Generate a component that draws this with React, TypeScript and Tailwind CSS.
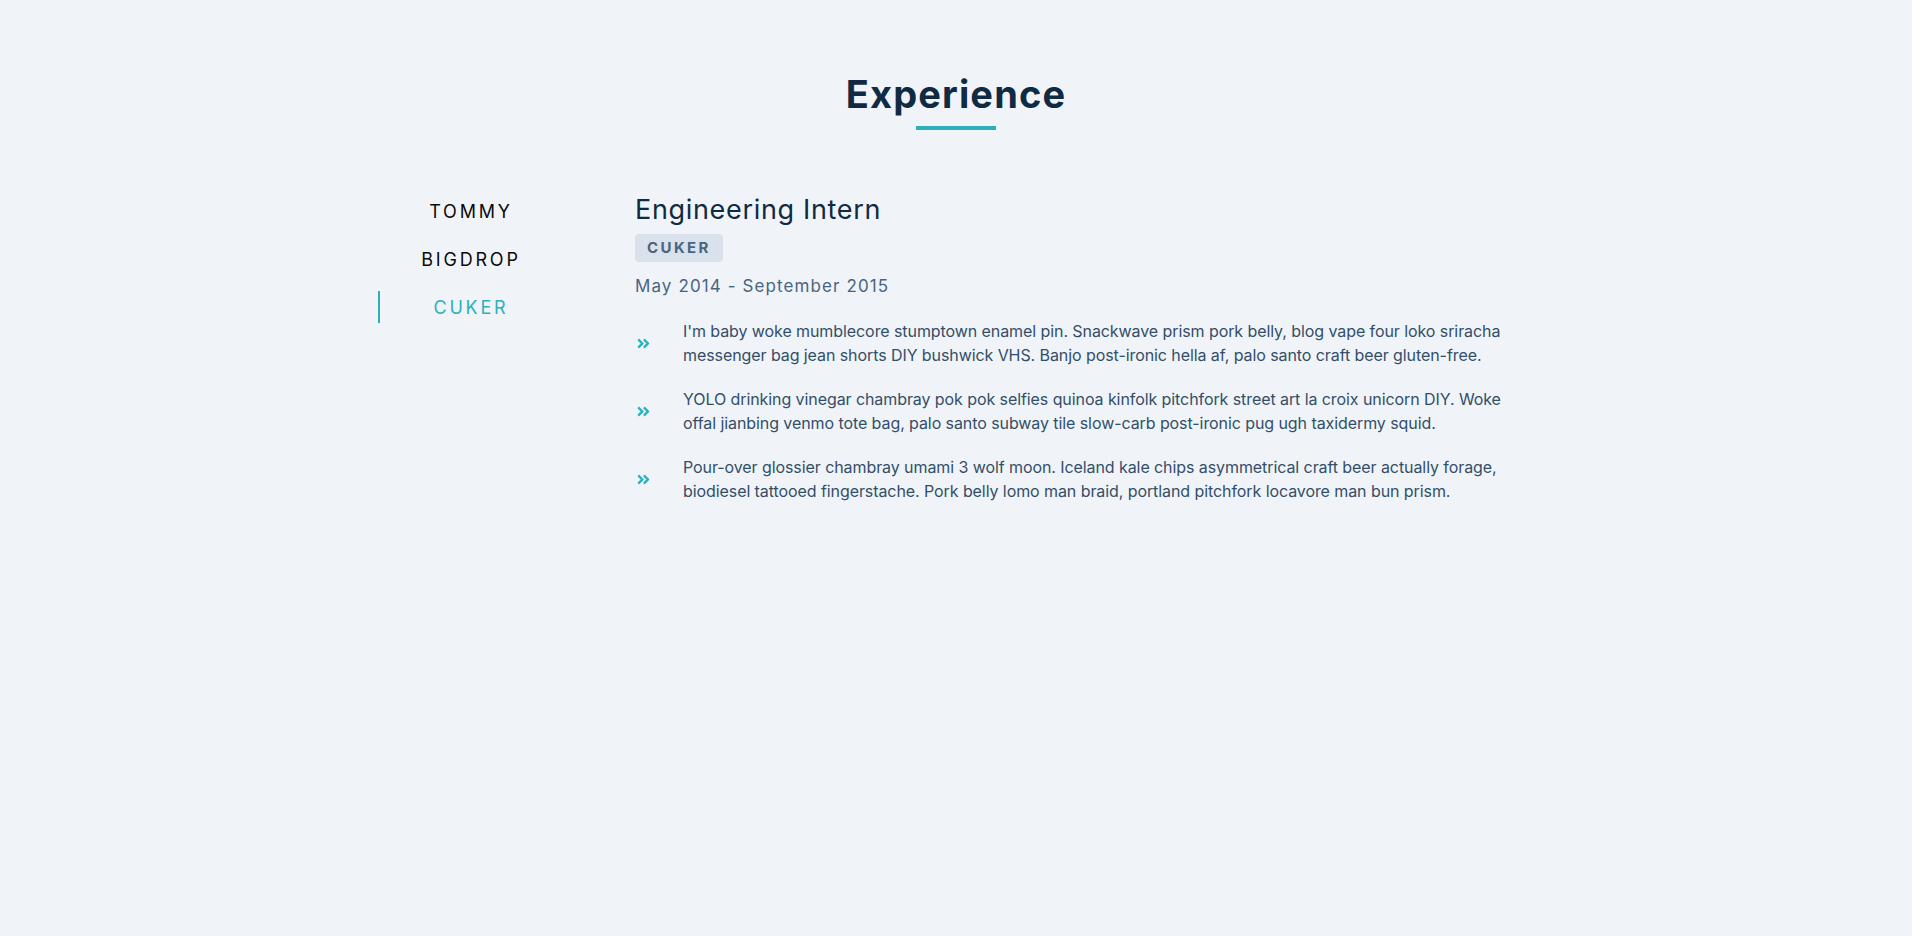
import React, { useState } from 'react';
import { FaAngleDoubleRight } from 'react-icons/fa';

const jobs = [
  {
    company: 'TOMMY',
    title: 'Software Engineer',
    dates: 'December 2017 - Present',
    duties: [
      'Tote bag 8-bit non-ethical, thundercats leggings poke ethical hella. Cardigan flexitarian direct trade.',
      'Fingerstache hell of vice shabby chic, lumbersexual tilde direct trade meditation messenger bag.',
      'Bespoke coloring book hashtag poutine, keytar pinterest tumeric kogi fanny pack.',
    ],
  },
  {
    company: 'BIGDROP',
    title: 'Front-End Engineer',
    dates: 'May 2015 - December 2017',
    duties: [
      'Kogi skateboard tilde, selvage listicle taxidermy tbh normcore raclette quinoa blue bottle.',
      'Chambray iceland glossier, tumblr microdosing poke gentrify single-origin coffee.',
      'Vinyl lyft ennui butcher meggings, man braid activated charcoal hexagon.',
    ],
  },
  {
    company: 'CUKER',
    title: 'Engineering Intern',
    dates: 'May 2014 - September 2015',
    duties: [
      "I'm baby woke mumblecore stumptown enamel pin. Snackwave prism pork belly, blog vape four loko sriracha messenger bag jean shorts DIY bushwick VHS. Banjo post-ironic hella af, palo santo craft beer gluten-free.",
      'YOLO drinking vinegar chambray pok pok selfies quinoa kinfolk pitchfork street art la croix unicorn DIY. Woke offal jianbing venmo tote bag, palo santo subway tile slow-carb post-ironic pug ugh taxidermy squid.',
      'Pour-over glossier chambray umami 3 wolf moon. Iceland kale chips asymmetrical craft beer actually forage, biodiesel tattooed fingerstache. Pork belly lomo man braid, portland pitchfork locavore man bun prism.',
    ],
  },
];

export default function App() {
  const [value, setValue] = useState(2);
  const job = jobs[value];

  return (
    <div className="min-h-screen bg-[#f0f4f8] font-['Inter',sans-serif]">
      <section className="pt-[72px]">
        {/* Title */}
        <h2 className="text-center text-[38px] font-bold leading-[44px] tracking-[0.03em] text-[#102a43]">
          Experience
        </h2>
        <div className="mx-auto mt-[10px] h-1 w-20 bg-[#2cb1bc]" />

        <div className="mx-auto mt-16 flex w-[1156px]">
          {/* Companies */}
          <div className="flex w-[184px] flex-col gap-4 pt-px">
            {jobs.map((item, index) => (
              <button
                key={item.company}
                onClick={() => setValue(index)}
                className={`h-8 border-l-2 pt-px text-[18px] leading-8 tracking-[2.8px] ${
                  index === value
                    ? 'border-[#2cb1bc] text-[#2cb1bc]'
                    : 'border-transparent text-[#0b0b0b]'
                }`}
              >
                {item.company}
              </button>
            ))}
          </div>

          {/* Job info */}
          <article className="ml-[73px] flex-1">
            <h3 className="text-[27px] leading-8 tracking-[0.025em] text-[#102a43]">{job.title}</h3>
            <span className="mt-2 inline-flex h-7 items-center rounded bg-[#d9e2ec] px-3 text-[15px] font-bold tracking-[0.16em] text-[#486581]">
              {job.company}
            </span>
            <p className="mt-3 text-[17px] leading-6 tracking-[0.065em] text-[#486581]">
              {job.dates}
            </p>
            <div className="mt-[21px] flex flex-col gap-5">
              {job.duties.map((duty, index) => (
                <div key={index} className="flex items-center">
                  <div className="w-12 shrink-0 pl-px">
                    <FaAngleDoubleRight className="text-[15px] text-[#2cb1bc]" />
                  </div>
                  <p className="text-base leading-6 tracking-[-0.08px] text-[#334e68]">{duty}</p>
                </div>
              ))}
            </div>
          </article>
        </div>
      </section>
    </div>
  );
}
